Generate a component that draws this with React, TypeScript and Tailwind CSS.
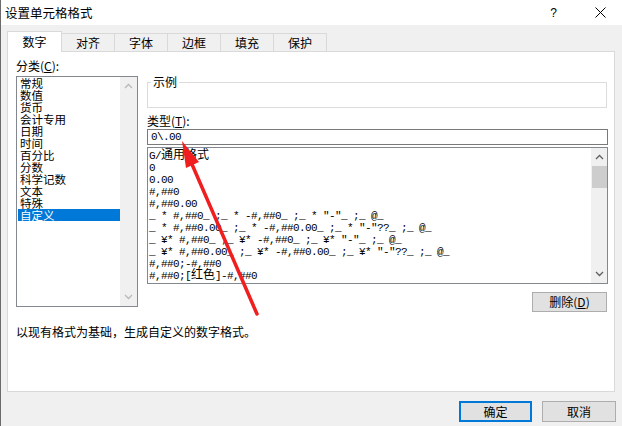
import React from "react";

const cats = ["常规", "数值", "货币", "会计专用", "日期", "时间", "百分比", "分数", "科学记数", "文本", "特殊", "自定义"];

const fmts: React.ReactNode[] = [
  <>G/<span className="text-[12px] tracking-normal">通用格式</span></>,
  "0",
  "0.00",
  "#,##0",
  "#,##0.00",
  '_ * #,##0_ ;_ * -#,##0_ ;_ * "-"_ ;_ @_',
  '_ * #,##0.00_ ;_ * -#,##0.00_ ;_ * "-"??_ ;_ @_',
  '_ ¥* #,##0_ ;_ ¥* -#,##0_ ;_ ¥* "-"_ ;_ @_',
  '_ ¥* #,##0.00_ ;_ ¥* -#,##0.00_ ;_ ¥* "-"??_ ;_ @_',
  "#,##0;-#,##0",
  <>#,##0;[<span className="text-[12px] tracking-normal">红色</span>]-#,##0</>,
];

const Up = ({ c }: { c: string }) => (
  <svg width="9" height="6" viewBox="0 0 9 6"><path d="M1 5 L4.5 1.5 L8 5" fill="none" stroke={c} strokeWidth="1.3" /></svg>
);
const Down = ({ c }: { c: string }) => (
  <svg width="9" height="6" viewBox="0 0 9 6"><path d="M1 1 L4.5 4.5 L8 1" fill="none" stroke={c} strokeWidth="1.3" /></svg>
);

export default function App() {
  const tabs = ["对齐", "字体", "边框", "填充", "保护"];
  return (
    <div className="relative w-[622px] h-[426px] bg-[#f0f0f0] border-l border-[#6b6b6b] flex flex-col overflow-hidden text-[12px] text-black font-['Noto_Sans_CJK_SC',sans-serif]">
      {/* title bar */}
      <div className="h-[25px] bg-white flex items-center pl-[4px] shrink-0">
        <span className="leading-[16px] text-[12.5px]">设置单元格格式</span>
        <span className="ml-auto mr-[38px] text-[12px] leading-[16px] font-['Liberation_Sans',sans-serif]">?</span>
        <svg width="11" height="11" viewBox="0 0 11 11" className="mr-[16px]">
          <path d="M0.5 0.5 L10.5 10.5 M10.5 0.5 L0.5 10.5" stroke="#000" strokeWidth="1" />
        </svg>
      </div>

      {/* tabs */}
      <div className="mt-[6px] pl-[6px] relative z-10 flex items-end h-[21px]">
        <div className="h-[21px] w-[55px] bg-white border border-b-0 border-[#d9d9d9] flex items-center justify-center leading-[16px]">数字</div>
        {tabs.map((t) => (
          <div key={t} className="h-[19px] w-[54px] -ml-px first:ml-0 bg-[#f0f0f0] border border-[#d9d9d9] flex items-center justify-center leading-[16px]">
            {t}
          </div>
        ))}
      </div>

      {/* panel */}
      <div className="-mt-px ml-[6px] w-[608px] h-[341px] bg-white border border-[#d9d9d9] flex flex-col pl-[8px] pt-[6px]">
        <div className="flex gap-[9px]">
          {/* left column */}
          <div className="w-[122px] flex flex-col">
            <div className="leading-[16px] h-[16px]">分类(<span className="underline">C</span>):</div>
            <div className="mt-[2px] h-[231px] border border-[#828790] flex">
              <div className="flex-1 pl-px flex flex-col">
                {cats.map((c, i) => (
                  <div
                    key={c}
                    className={
                      i === cats.length - 1
                        ? "h-[12px] leading-[12px] text-[11.5px] pl-[2px] bg-[#0078d7] text-white"
                        : "h-[12px] leading-[12px] text-[11.5px] pl-[2px]"
                    }
                  >
                    {c}
                  </div>
                ))}
              </div>
              <div className="w-[17px] bg-[#f0f0f0] flex flex-col items-center justify-between py-[6px]">
                <Up c="#b8b8b8" />
                <Down c="#b8b8b8" />
              </div>
            </div>
          </div>

          {/* right column */}
          <div className="w-[461px] flex flex-col">
            <fieldset className="mt-[17px] h-[33px] border border-[#dcdcdc] pl-[3px] mr-px">
              <legend className="px-[2px] leading-[14px]">示例</legend>
            </fieldset>
            <div className="mt-[5px] leading-[16px] h-[16px]">类型(<span className="underline">T</span>):</div>
            <div className="h-[16px] border border-[#7a7a7a] pl-[3px] flex items-center font-['Liberation_Mono',monospace] text-[11px] tracking-[-0.6px] leading-[12px]">
              0\.00
            </div>
            <div className="mt-[2px] h-[137px] border border-[#828790] flex">
              <div className="flex-1 pt-[2px] pl-px overflow-hidden flex flex-col font-['Liberation_Mono','Noto_Sans_CJK_SC',monospace] text-[11px] tracking-[-0.6px] whitespace-pre">
                {fmts.map((f, i) => (
                  <div key={i} className="h-[12px] leading-[12px]">{f}</div>
                ))}
              </div>
              <div className="w-[16px] bg-[#f0f0f0] flex flex-col items-center pt-[6px] pb-[6px]">
                <Up c="#606060" />
                <div className="mt-[6px] w-[15px] h-[22px] bg-[#cdcdcd]" />
                <div className="flex-1" />
                <Down c="#606060" />
              </div>
            </div>
            <button className="mt-[8px] self-end mr-px w-[75px] h-[20px] bg-[#e1e1e1] border border-[#adadad] leading-[16px]">
              删除(<span className="underline">D</span>)
            </button>
          </div>
        </div>
        <div className="mt-[12px] leading-[16px]">以现有格式为基础，生成自定义的数字格式。</div>
      </div>

      {/* bottom buttons */}
      <div className="mt-[9px] flex justify-end gap-[10px] pr-[6px]">
        <button className="w-[73px] h-[21px] bg-[#e1e1e1] border-2 border-[#0078d7] leading-[16px]">确定</button>
        <button className="w-[74px] h-[21px] bg-[#e1e1e1] border border-[#adadad] leading-[16px]">取消</button>
      </div>

      {/* red arrow annotation */}
      <svg className="absolute left-0 top-0 pointer-events-none" width="622" height="426" viewBox="0 0 622 426">
        <line x1="256" y1="314" x2="190" y2="162" stroke="#f01e1e" strokeWidth="3.5" strokeLinecap="round" />
        <polygon points="181,141 198,162 185,168" fill="#f01e1e" />
      </svg>
    </div>
  );
}
